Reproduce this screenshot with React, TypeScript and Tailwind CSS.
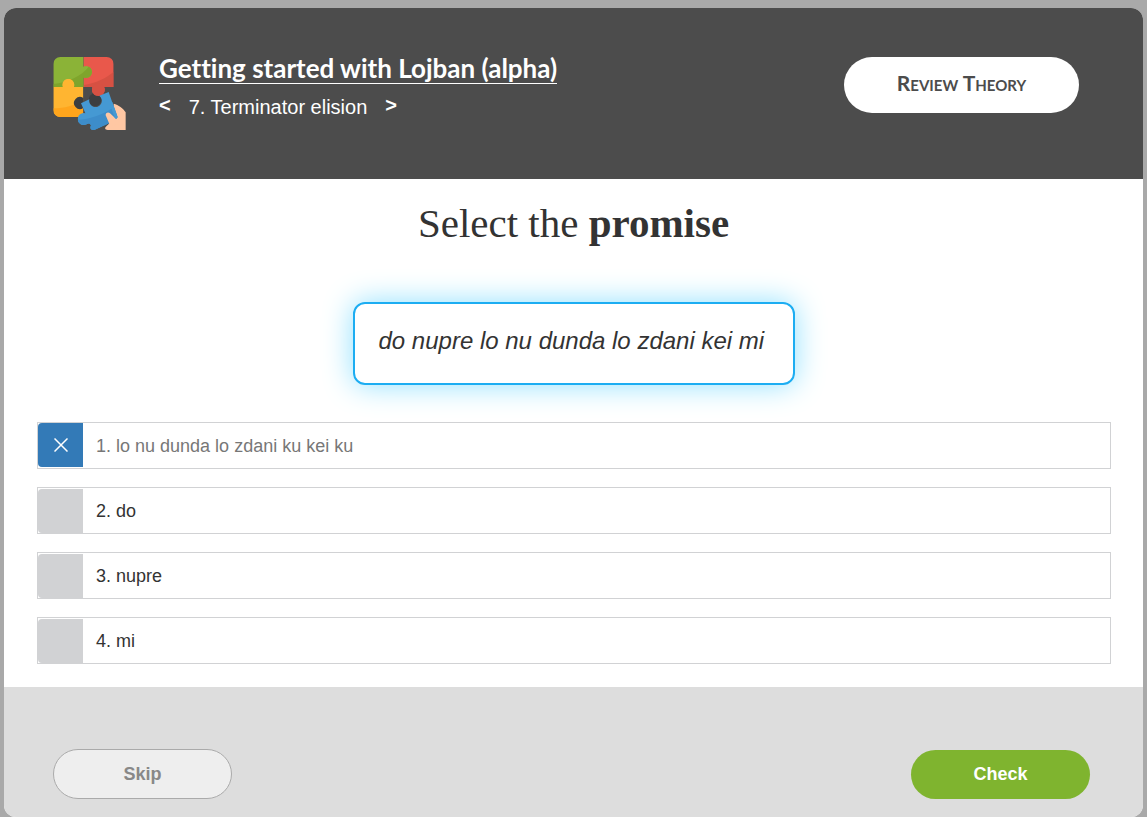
import { useState } from "react";

const OPTIONS = ["lo nu dunda lo zdani ku kei ku", "do", "nupre", "mi"];

function PuzzleLogo() {
  return (
    <svg viewBox="40 36 219 219" className="size-[73px] shrink-0" aria-hidden="true">
      <defs>
        <clipPath id="green-piece">
          <path d="M62 36H131V126H41V57a21 21 0 0 1 21-21z" />
          <circle cx="139" cy="81" r="18" />
        </clipPath>
        <clipPath id="red-piece">
          <path d="M131 36H201a21 21 0 0 1 21 21V126H131z" />
          <circle cx="176" cy="134" r="19" />
        </clipPath>
        <clipPath id="yellow-piece">
          <path d="M41 126H131V216H62a21 21 0 0 1-21-21z" />
          <circle cx="86" cy="119" r="18" />
        </clipPath>
        <clipPath id="blue-piece">
          <path d="M124 175L149 163A19 19 0 1 0 179 152L207 141 234 218 214 232 164 255C156 257 149 252 154 241 150 233 145 236 141 238A18 18 0 1 1 137 205Z" />
        </clipPath>
      </defs>
      <g clipPath="url(#red-piece)">
        <path d="M120 30H230V160H120z" fill="#e9584b" />
        <path d="M131 120C170 114 200 99 222 80V160H131z" fill="#d65143" />
      </g>
      <g clipPath="url(#green-piece)">
        <path d="M40 30H160V130H40z" fill="#8bb337" />
        <path d="M41 117C85 112 125 94 150 62L160 70V126H41z" fill="#7fa52c" />
      </g>
      <g clipPath="url(#yellow-piece)">
        <path d="M40 95H135V220H40z" fill="#ffb531" />
        <path d="M41 190C74 190 105 181 131 164V216H41z" fill="#ffa51c" />
      </g>
      <path d="M131 159a18 18 0 1 0 0 30z" fill="#3c3e40" />
      <circle cx="166" cy="164" r="19" fill="#3c3e40" />
      <circle cx="176" cy="134" r="19" fill="#d65143" />
      <path d="M222 176C236 179 251 190 258 202V255H204C196 255 194 249 200 244L220 225Z" fill="#ffc7a3" />
      <g clipPath="url(#blue-piece)">
        <path d="M110 135H240V258H110z" fill="#4599d3" />
        <path d="M110 224C151 224 190 209 223 186L240 218V258H110z" fill="#3d8dca" />
      </g>
      <path d="M198 211C197 204 205 200 211 205L230 223 236 215V238L212 244Z" fill="#ffc7a3" />
      <path d="M218 171L234 215C233 219 230 222 226 220L210 176Z" fill="#4599d3" />
    </svg>
  );
}

export default function App() {
  const [selected, setSelected] = useState(0);

  return (
    <div className="flex min-h-screen flex-col bg-[#a9a9a9] px-1 pt-2 font-['Liberation_Sans',Arial,sans-serif] text-[#333]">
      <main className="flex grow flex-col overflow-hidden rounded-xl bg-white">
        <header className="flex min-h-[171px] items-start justify-between bg-[#4c4c4c] pt-12 pr-16 pl-12 text-white">
          <div className="flex gap-[33px] pt-px pl-px">
            <PuzzleLogo />
            <div>
              <h1 className="font-['Lato',sans-serif] text-[26px] leading-[22px] font-bold [font-variant-ligatures:none]">
                <a href="#course" className="inline-block border-b border-white pb-1">
                  Getting started with Lojban (alpha)
                </a>
              </h1>
              <nav className="mt-[7px] flex items-center text-xl leading-7" aria-label="Lessons">
                <a href="#previous" aria-label="Previous lesson" className="pb-1 font-bold">&lt;</a>
                <span className="mx-[18px]">7. Terminator elision</span>
                <a href="#next" aria-label="Next lesson" className="pb-1 font-bold">&gt;</a>
              </nav>
            </div>
          </div>
          <button
            type="button"
            className="mt-px h-14 w-[235px] rounded-full bg-white pb-1 font-['Lato',sans-serif] text-[21px] font-bold text-[#4c4c4c] [font-variant:small-caps]"
          >
            Review Theory
          </button>
        </header>

        <section className="flex grow flex-col px-8 pt-5 pb-[23px]">
          <h2 className="text-center font-['Liberation_Serif','Times_New_Roman',serif] text-[41px] leading-[48px]">
            Select the <strong>promise</strong>
          </h2>
          <p className="mx-auto mt-[55px] h-[83px] min-w-[442px] rounded-xl border-2 border-[#1cadf2] px-6 pt-[21px] text-2xl leading-8 italic shadow-[0_0_30px_#8fe0ff]">
            do nupre lo nu dunda lo zdani kei mi
          </p>

          <fieldset aria-label="Answers" className="mt-[37px] flex flex-col gap-[18px] pl-px">
            {OPTIONS.map((option, i) => (
              <label
                key={option}
                className={`flex h-[47px] items-center border border-[#d1d2d4] text-lg ${selected === i ? "text-[#777]" : "text-[#333]"}`}
              >
                <span className={`grid shrink-0 place-items-center ${selected === i ? "self-start" : "self-end"}`}>
                  <input
                    type="radio"
                    name="answer"
                    checked={selected === i}
                    onChange={() => setSelected(i)}
                    className="col-start-1 row-start-1 h-11 w-[45px] appearance-none rounded-l bg-[#d1d2d4] checked:bg-[#337ab7]"
                  />
                  {selected === i && (
                    <svg
                      viewBox="0 0 14 14"
                      className="pointer-events-none col-start-1 row-start-1 size-[14px] stroke-white"
                      strokeWidth="1.5"
                      aria-hidden="true"
                    >
                      <path d="M.5 .5l13 13M13.5 .5l-13 13" />
                    </svg>
                  )}
                </span>
                <span className="pl-[13px]">
                  {i + 1}. {option}
                </span>
              </label>
            ))}
          </fieldset>
        </section>

        <footer className="flex min-h-[130px] items-end justify-between bg-[#ddd] pr-[53px] pb-[18px] pl-[49px] text-lg font-bold">
          <button type="button" className="h-[50px] w-[179px] rounded-full border border-[#aaa] bg-[#eee] text-[#888]">
            Skip
          </button>
          <button type="button" className="h-[49px] w-[179px] rounded-full bg-[#7fb42f] pb-0.5 text-white">
            Check
          </button>
        </footer>
      </main>
    </div>
  );
}
